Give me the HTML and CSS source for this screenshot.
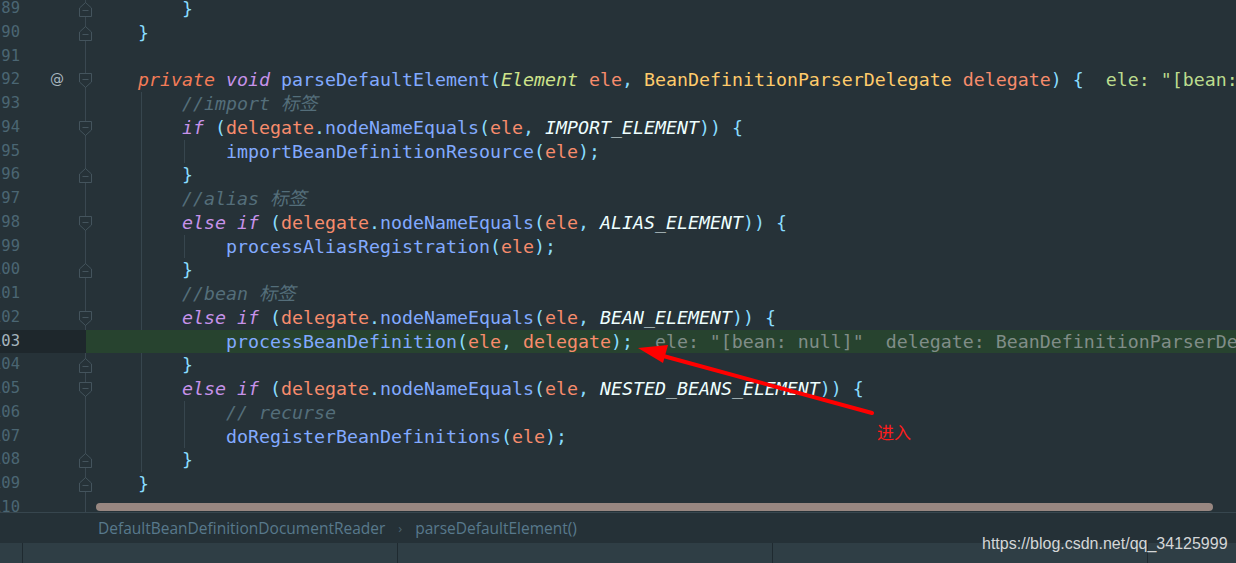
FILE: index.html
```html
<!DOCTYPE html>
<html>
<head>
    <title>DefaultBeanDefinitionDocumentReader</title>
    <link rel="stylesheet" href="styles.css">
</head>
<body>
    <div class="ide">
        <div class="editor">
            <div class="lines">
                <div class="ln"><span class="num">89</span><span class="mark"></span><span class="fold"><svg class="fm" viewBox="0 0 13 15"><path d="M0.5 14.5H12.5V6L6.5 0.5L0.5 6Z"/><path d="M3.5 8.5H9.5"/></svg></span><span class="code">        <i class="pu">}</i></span></div>
                <div class="ln"><span class="num">90</span><span class="mark"></span><span class="fold"><svg class="fm" viewBox="0 0 13 15"><path d="M0.5 14.5H12.5V6L6.5 0.5L0.5 6Z"/><path d="M3.5 8.5H9.5"/></svg></span><span class="code">    <i class="pu">}</i></span></div>
                <div class="ln"><span class="num">91</span><span class="mark"></span><span class="fold"></span><span class="code"></span></div>
                <div class="ln"><span class="num">92</span><span class="mark">@</span><span class="fold"><svg class="fm" viewBox="0 0 13 15"><path d="M0.5 0.5H12.5V9L6.5 14.5L0.5 9Z"/><path d="M3.5 6.5H9.5"/></svg></span><span class="code">    <em class="kp">private</em> <em class="kw">void</em> <b class="fn">parseDefaultElement</b><i class="pu">(</i><em class="ty">Element</em> <b class="pa">ele</b><i class="pu">,</i> <b class="cl">BeanDefinitionParserDelegate</b> <b class="pa">delegate</b><i class="pu">)</i> <i class="pu">{</i><span class="hint">ele: "[bean: null]"  delegate: BeanDefinitionParserDelegate@1b</span></span></div>
                <div class="ln"><span class="num">93</span><span class="mark"></span><span class="fold"></span><span class="code g1">        <em class="co">//import 标签</em></span></div>
                <div class="ln"><span class="num">94</span><span class="mark"></span><span class="fold"><svg class="fm" viewBox="0 0 13 15"><path d="M0.5 0.5H12.5V9L6.5 14.5L0.5 9Z"/><path d="M3.5 6.5H9.5"/></svg></span><span class="code g1">        <em class="kw">if</em> <i class="pu">(</i><b class="pa">delegate</b><i class="pu">.</i><b class="fn">nodeNameEquals</b><i class="pu">(</i><b class="pa">ele</b><i class="pu">,</i> <em class="cn">IMPORT_ELEMENT</em><i class="pu">))</i> <i class="pu">{</i></span></div>
                <div class="ln"><span class="num">95</span><span class="mark"></span><span class="fold"></span><span class="code g2">            <b class="fn">importBeanDefinitionResource</b><i class="pu">(</i><b class="pa">ele</b><i class="pu">);</i></span></div>
                <div class="ln"><span class="num">96</span><span class="mark"></span><span class="fold"><svg class="fm" viewBox="0 0 13 15"><path d="M0.5 14.5H12.5V6L6.5 0.5L0.5 6Z"/><path d="M3.5 8.5H9.5"/></svg></span><span class="code g1">        <i class="pu">}</i></span></div>
                <div class="ln"><span class="num">97</span><span class="mark"></span><span class="fold"></span><span class="code g1">        <em class="co">//alias 标签</em></span></div>
                <div class="ln"><span class="num">98</span><span class="mark"></span><span class="fold"><svg class="fm" viewBox="0 0 13 15"><path d="M0.5 0.5H12.5V9L6.5 14.5L0.5 9Z"/><path d="M3.5 6.5H9.5"/></svg></span><span class="code g1">        <em class="kw">else if</em> <i class="pu">(</i><b class="pa">delegate</b><i class="pu">.</i><b class="fn">nodeNameEquals</b><i class="pu">(</i><b class="pa">ele</b><i class="pu">,</i> <em class="cn">ALIAS_ELEMENT</em><i class="pu">))</i> <i class="pu">{</i></span></div>
                <div class="ln"><span class="num">99</span><span class="mark"></span><span class="fold"></span><span class="code g2">            <b class="fn">processAliasRegistration</b><i class="pu">(</i><b class="pa">ele</b><i class="pu">);</i></span></div>
                <div class="ln"><span class="num">100</span><span class="mark"></span><span class="fold"><svg class="fm" viewBox="0 0 13 15"><path d="M0.5 14.5H12.5V6L6.5 0.5L0.5 6Z"/><path d="M3.5 8.5H9.5"/></svg></span><span class="code g1">        <i class="pu">}</i></span></div>
                <div class="ln"><span class="num">101</span><span class="mark"></span><span class="fold"></span><span class="code g1">        <em class="co">//bean 标签</em></span></div>
                <div class="ln"><span class="num">102</span><span class="mark"></span><span class="fold"><svg class="fm" viewBox="0 0 13 15"><path d="M0.5 0.5H12.5V9L6.5 14.5L0.5 9Z"/><path d="M3.5 6.5H9.5"/></svg></span><span class="code g1">        <em class="kw">else if</em> <i class="pu">(</i><b class="pa">delegate</b><i class="pu">.</i><b class="fn">nodeNameEquals</b><i class="pu">(</i><b class="pa">ele</b><i class="pu">,</i> <em class="cn">BEAN_ELEMENT</em><i class="pu">))</i> <i class="pu">{</i></span></div>
                <div class="ln current"><span class="num">103</span><span class="mark"></span><span class="fold"></span><span class="code g2">            <b class="fn">processBeanDefinition</b><i class="pu">(</i><b class="pa">ele</b><i class="pu">,</i> <b class="pa">delegate</b><i class="pu">);</i><span class="hint dim">ele: "[bean: null]"  delegate: BeanDefinitionParserDelegate@1b2c</span></span></div>
                <div class="ln"><span class="num">104</span><span class="mark"></span><span class="fold"><svg class="fm" viewBox="0 0 13 15"><path d="M0.5 14.5H12.5V6L6.5 0.5L0.5 6Z"/><path d="M3.5 8.5H9.5"/></svg></span><span class="code g1">        <i class="pu">}</i></span></div>
                <div class="ln"><span class="num">105</span><span class="mark"></span><span class="fold"><svg class="fm" viewBox="0 0 13 15"><path d="M0.5 0.5H12.5V9L6.5 14.5L0.5 9Z"/><path d="M3.5 6.5H9.5"/></svg></span><span class="code g1">        <em class="kw">else if</em> <i class="pu">(</i><b class="pa">delegate</b><i class="pu">.</i><b class="fn">nodeNameEquals</b><i class="pu">(</i><b class="pa">ele</b><i class="pu">,</i> <em class="cn">NESTED_BEANS_ELEMENT</em><i class="pu">))</i> <i class="pu">{</i></span></div>
                <div class="ln"><span class="num">106</span><span class="mark"></span><span class="fold"></span><span class="code g2">            <em class="co">// recurse</em></span></div>
                <div class="ln"><span class="num">107</span><span class="mark"></span><span class="fold"></span><span class="code g2">            <b class="fn">doRegisterBeanDefinitions</b><i class="pu">(</i><b class="pa">ele</b><i class="pu">);</i></span></div>
                <div class="ln"><span class="num">108</span><span class="mark"></span><span class="fold"><svg class="fm" viewBox="0 0 13 15"><path d="M0.5 14.5H12.5V6L6.5 0.5L0.5 6Z"/><path d="M3.5 8.5H9.5"/></svg></span><span class="code g1">        <i class="pu">}</i></span></div>
                <div class="ln"><span class="num">109</span><span class="mark"></span><span class="fold"><svg class="fm" viewBox="0 0 13 15"><path d="M0.5 14.5H12.5V6L6.5 0.5L0.5 6Z"/><path d="M3.5 8.5H9.5"/></svg></span><span class="code">    <i class="pu">}</i></span></div>
                <div class="ln"><span class="num">110</span><span class="mark"></span><span class="fold"></span><span class="code"></span></div>
            </div>
            <div class="hscroll"></div>
        </div>

        <div class="crumbs">
            <span>DefaultBeanDefinitionDocumentReader</span>
            <span class="sep">›</span>
            <span>parseDefaultElement()</span>
        </div>

        <div class="status">
            <div class="cell first"></div>
            <div class="cell"></div>
            <div class="cell"></div>
            <div class="cell"></div>
            <div class="cell last"></div>
        </div>
    </div>

    <!-- annotation drawn over the screenshot -->
    <svg class="arrow" width="1236" height="563" viewBox="0 0 1236 563">
        <line x1="872" y1="413" x2="656" y2="354" stroke="#ff0000" stroke-width="4" stroke-linecap="round"/>
        <polygon points="638,348 668,345 663,363" fill="#ff0000"/>
    </svg>
    <div class="note">进入</div>
    <div class="watermark">https://blog.csdn.net/qq_34125999</div>
</body>
</html>
```

FILE: styles.css
```css
body {
    margin: 0;
    background: #263238;
    overflow: hidden;
    width: 1236px;
    height: 563px;
}

.ide {
    display: flex;
    flex-direction: column;
    height: 563px;
}

.editor {
    position: relative;
    height: 512px;
    overflow: hidden;
    background: #263238;
}

.lines {
    margin-top: -3px;
}

.ln {
    display: flex;
    height: 23.75px;
    line-height: 23.75px;
    font-family: "DejaVu Sans Mono", "Noto Sans CJK SC", monospace;
}

.num {
    flex: none;
    width: 40px;
    margin-left: -20px;
    text-align: right;
    font-size: 15.5px;
    color: #4b6673;
}

.mark {
    flex: none;
    width: 52px;
    padding-left: 30px;
    box-sizing: border-box;
    font-family: "DejaVu Sans", sans-serif;
    font-size: 14px;
    color: #a9b8c0;
}

.fold {
    flex: none;
    width: 14px;
    display: flex;
    align-items: center;
    background: linear-gradient(#3a4851, #3a4851) no-repeat 13px 0 / 1px 100%;
}

.fm {
    flex: none;
    width: 13px;
    height: 15px;
    margin-left: 7px;
    margin-top: 1px;
}

.fm path {
    fill: #263238;
    stroke: #44545d;
    stroke-width: 1;
}

.code {
    flex: 1;
    min-width: 0;
    padding-left: 8px;
    white-space: pre;
    overflow: hidden;
    font-size: 18.27px;
    color: #eeffff;
}

.code.g1 {
    background: linear-gradient(#37464e, #37464e) no-repeat 55px 0 / 1px 100%;
}

.code.g2 {
    background:
        linear-gradient(#37464e, #37464e) no-repeat 55px 0 / 1px 100%,
        linear-gradient(#37464e, #37464e) no-repeat 98px 0 / 1px 100%;
}

.ln.current .num,
.ln.current .mark,
.ln.current .fold {
    background: #1e272c;
}

.ln.current .num {
    color: #a5b4bc;
}

.ln.current .code {
    background: #27432f;
}

.code b,
.code i,
.code em {
    font-weight: normal;
    font-style: normal;
}

.code em {
    font-style: italic;
}

.kp { color: #f47c57; }
.kw { color: #c792ea; }
.fn { color: #82aaff; }
.pa { color: #f78c6c; }
.ty { color: #cfe48b; }
.cl { color: #ffcb6b; }
.pu { color: #89ddff; }
.cn { color: #eeffff; }
.co { color: #546e7a; }

.hint {
    margin-left: 22px;
    color: #bcdc8e;
}

.hint.dim {
    color: #808d88;
}

.hscroll {
    position: absolute;
    left: 96px;
    width: 1117px;
    top: 503px;
    height: 8px;
    border-radius: 4px;
    background: #988781;
}

.crumbs {
    height: 30px;
    border-top: 1px solid #37464e;
    background: #253137;
    display: flex;
    align-items: center;
    gap: 13px;
    padding-left: 98px;
    font-family: "Open Sans", sans-serif;
    font-size: 15.5px;
    color: #58798c;
}

.crumbs .sep {
    color: #4a6270;
    font-size: 13px;
}

.status {
    flex: 1;
    display: flex;
    background: #2f3e45;
}

.status .cell {
    border-right: 1px solid #1f2a30;
    width: 374px;
}

.status .cell.first {
    width: 22px;
}

.status .cell.last {
    flex: 1;
    border-right: none;
}

.arrow {
    position: absolute;
    left: 0;
    top: 0;
}

.note {
    position: absolute;
    left: 877px;
    top: 421px;
    font-family: "Noto Sans CJK SC", sans-serif;
    font-size: 17px;
    line-height: 22px;
    color: #ff1c1c;
}

.watermark {
    position: absolute;
    left: 982px;
    top: 535px;
    font-family: "Liberation Sans", Arial, sans-serif;
    font-size: 16px;
    line-height: 18px;
    color: #d4d6d7;
}
```
